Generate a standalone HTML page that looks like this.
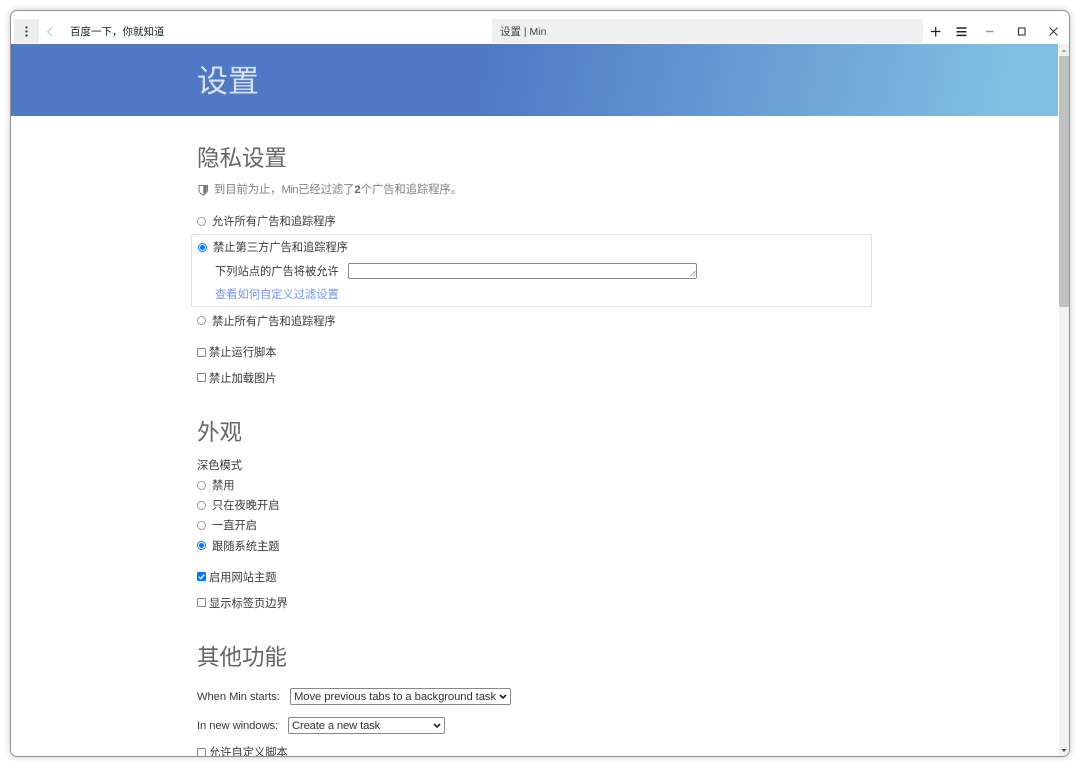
<!DOCTYPE html>
<html lang="zh"><head><meta charset="utf-8"><title>设置 | Min</title>
<style>
html,body{margin:0;padding:0;width:1080px;height:768px;overflow:hidden;background:#fff}
body{position:relative;font-family:"Liberation Sans","Noto Sans CJK SC",sans-serif;font-size:11.25px;color:#3a3a3a}
#p{position:absolute;left:0;top:0;width:1080px;height:768px;filter:blur(.25px)}
.win{position:absolute;left:10px;top:10px;width:1058px;height:745px;border:1px solid #8f9299;border-radius:7px;box-shadow:0 0 7px rgba(0,0,0,.22);overflow:hidden;background:#fff}
.a{position:absolute;white-space:nowrap;line-height:14px}
.h{color:#666;font-weight:400;white-space:nowrap;position:absolute}
.r{position:absolute;width:7px;height:7px;border:1px solid #999;border-radius:50%;background:#fff;box-sizing:content-box;margin:0}
.r.on{border-color:#0075ff}
.r.on:after{content:"";position:absolute;left:1px;top:1px;width:5px;height:5px;border-radius:50%;background:#0075ff}
.c{position:absolute;width:7px;height:7px;border:1px solid #858585;border-radius:1.5px;background:#fff}
.s{position:absolute;box-sizing:border-box;border:1px solid #888;border-radius:2px;height:17px;background:#fff;line-height:15px;padding-left:3px;padding-top:1px;white-space:nowrap;color:#333;letter-spacing:-.08px}
.s svg{position:absolute;right:3px;top:5px}
</style></head><body><div id="p">
<div class="win">
<div style="position:absolute;left:3px;top:8px;width:25px;height:24px;background:#ededed"></div>
<div style="position:absolute;left:481px;top:8px;width:431px;height:24px;background:#f0f0f0"></div>
<div style="position:absolute;left:0;top:33px;width:1047px;height:72px;background:linear-gradient(101deg,#4f79c4 0%,#4f79c4 45%,#7fbfe2 94%,#7fbfe2 100%)"></div>
<div style="position:absolute;left:1048px;top:33px;width:10px;height:712px;background:#f1f1f1"></div>
<div style="position:absolute;left:1048px;top:45px;width:10px;height:251px;background:#c1c1c1"></div>
<svg style="position:absolute;left:1048px;top:33px" width="10" height="712"><path d="M2.500 8 5 5.200 7.500 8z" fill="#a3a3a3"/><path d="M2.500 705 5 708 7.500 705z" fill="#505050"/></svg>
</div>
<svg style="position:absolute;left:0;top:0" width="1080" height="60" fill="none">
<circle cx="26.500" cy="27.500" r="1.100" fill="#333"/><circle cx="26.500" cy="31.500" r="1.100" fill="#333"/><circle cx="26.500" cy="35.500" r="1.100" fill="#333"/>
<path d="M52.500 27 47.500 31.800 52.500 36.500" stroke="#c4c4c4" stroke-width="1.100"/>
<path d="M931 31.500h9.500M935.700 27v9.500" stroke="#222" stroke-width="1.200"/>
<path d="M956.500 28h10M956.500 31.700h10M956.500 35.400h10" stroke="#222" stroke-width="1.500"/>
<path d="M986 31.500h7.500" stroke="#999" stroke-width="1.500"/>
<rect x="1018.500" y="28" width="6.500" height="7" stroke="#333" stroke-width="1.100"/>
<path d="M1049.500 27.500l8 8M1057.500 27.500l-8 8" stroke="#333" stroke-width="1"/>
</svg>
<div class="a" style="left:70px;top:25px;color:#222;font-size:10.500px">百度一下，你就知道</div>
<div class="a" style="left:500px;top:25px;color:#444;font-size:10.500px">设置 | Min</div>

<div class="h" style="left:197px;top:61px;font-size:31px;line-height:42px;color:#d6e0f2">设置</div>
<div class="h" style="left:197px;top:143px;font-size:22.500px;line-height:32px">隐私设置</div>
<svg style="position:absolute;left:198px;top:184px" width="11" height="12"><path d="M1 1.500h8.500v4.500c0 2.500-2 4-4.250 5C3 10 1 8.500 1 6z" fill="none" stroke="#777" stroke-width="1"/><path d="M5.250 2v8C7.500 9 8.800 7.500 8.800 6V2z" fill="#777"/></svg>
<div class="a" style="left:214px;top:183px;color:#808080">到目前为止，<span style="letter-spacing:-.5px">Min</span>已经过滤了<b style="color:#666">2</b>个广告和追踪程序。</div>

<div class="r" style="left:197px;top:217px"></div>
<div class="a" style="left:212px;top:215px">允许所有广告和追踪程序</div>
<div style="position:absolute;left:191px;top:234px;width:679px;height:71px;border:1px solid #e2e2e2;border-radius:2px"></div>
<div class="r on" style="left:198px;top:243px"></div>
<div class="a" style="left:213px;top:241px">禁止第三方广告和追踪程序</div>
<div class="a" style="left:215px;top:265px">下列站点的广告将被允许</div>
<div style="position:absolute;left:348px;top:263px;width:347px;height:14px;border:1px solid #8a8a8a;border-radius:2px;background:#fff"></div>
<svg style="position:absolute;left:689px;top:270px" width="7" height="7" fill="none" stroke="#999" stroke-width=".8"><path d="M1 6.500 6.500 1M4 6.500 6.500 4"/></svg>
<div class="a" style="left:215px;top:288px;color:#7596e8">查看如何自定义过滤设置</div>
<div class="r" style="left:197px;top:316px"></div>
<div class="a" style="left:212px;top:315px">禁止所有广告和追踪程序</div>
<div class="c" style="left:197px;top:348px"></div>
<div class="a" style="left:209px;top:346px">禁止运行脚本</div>
<div class="c" style="left:197px;top:373px"></div>
<div class="a" style="left:209px;top:372px">禁止加载图片</div>

<div class="h" style="left:197px;top:417px;font-size:22.500px;line-height:32px">外观</div>
<div class="a" style="left:197px;top:459px">深色模式</div>
<div class="r" style="left:197px;top:481px"></div>
<div class="a" style="left:212px;top:479px">禁用</div>
<div class="r" style="left:197px;top:501px"></div>
<div class="a" style="left:212px;top:499px">只在夜晚开启</div>
<div class="r" style="left:197px;top:521px"></div>
<div class="a" style="left:212px;top:519px">一直开启</div>
<div class="r on" style="left:197px;top:541px"></div>
<div class="a" style="left:212px;top:540px">跟随系统主题</div>
<svg style="position:absolute;left:197px;top:572px" width="9" height="9"><rect width="9" height="9" rx="1.500" fill="#0075ff"/><path d="M1.800 4.700 3.800 6.700 7.300 2.500" fill="none" stroke="#fff" stroke-width="1.400"/></svg>
<div class="a" style="left:209px;top:571px">启用网站主题</div>
<div class="c" style="left:197px;top:598px"></div>
<div class="a" style="left:209px;top:597px">显示标签页边界</div>

<div class="h" style="left:197px;top:642px;font-size:22.500px;line-height:32px">其他功能</div>
<div class="a" style="left:197px;top:690px;letter-spacing:-.1px">When Min starts:</div>
<div class="s" style="left:290px;top:688px;width:221px">Move previous tabs to a background task<svg width="8" height="6"><path d="M1 1 4 4 7 1" fill="none" stroke="#222" stroke-width="1.600"/></svg></div>
<div class="a" style="left:197px;top:719px;letter-spacing:-.1px">In new windows:</div>
<div class="s" style="left:288px;top:717px;width:157px;letter-spacing:-.15px">Create a new task<svg width="8" height="6"><path d="M1 1 4 4 7 1" fill="none" stroke="#222" stroke-width="1.600"/></svg></div>
<div style="position:absolute;left:190px;top:744px;width:300px;height:12px;overflow:hidden">
<div class="c" style="left:7px;top:4px"></div>
<div class="a" style="left:19px;top:2px">允许自定义脚本</div>
</div>
</div></body></html>
